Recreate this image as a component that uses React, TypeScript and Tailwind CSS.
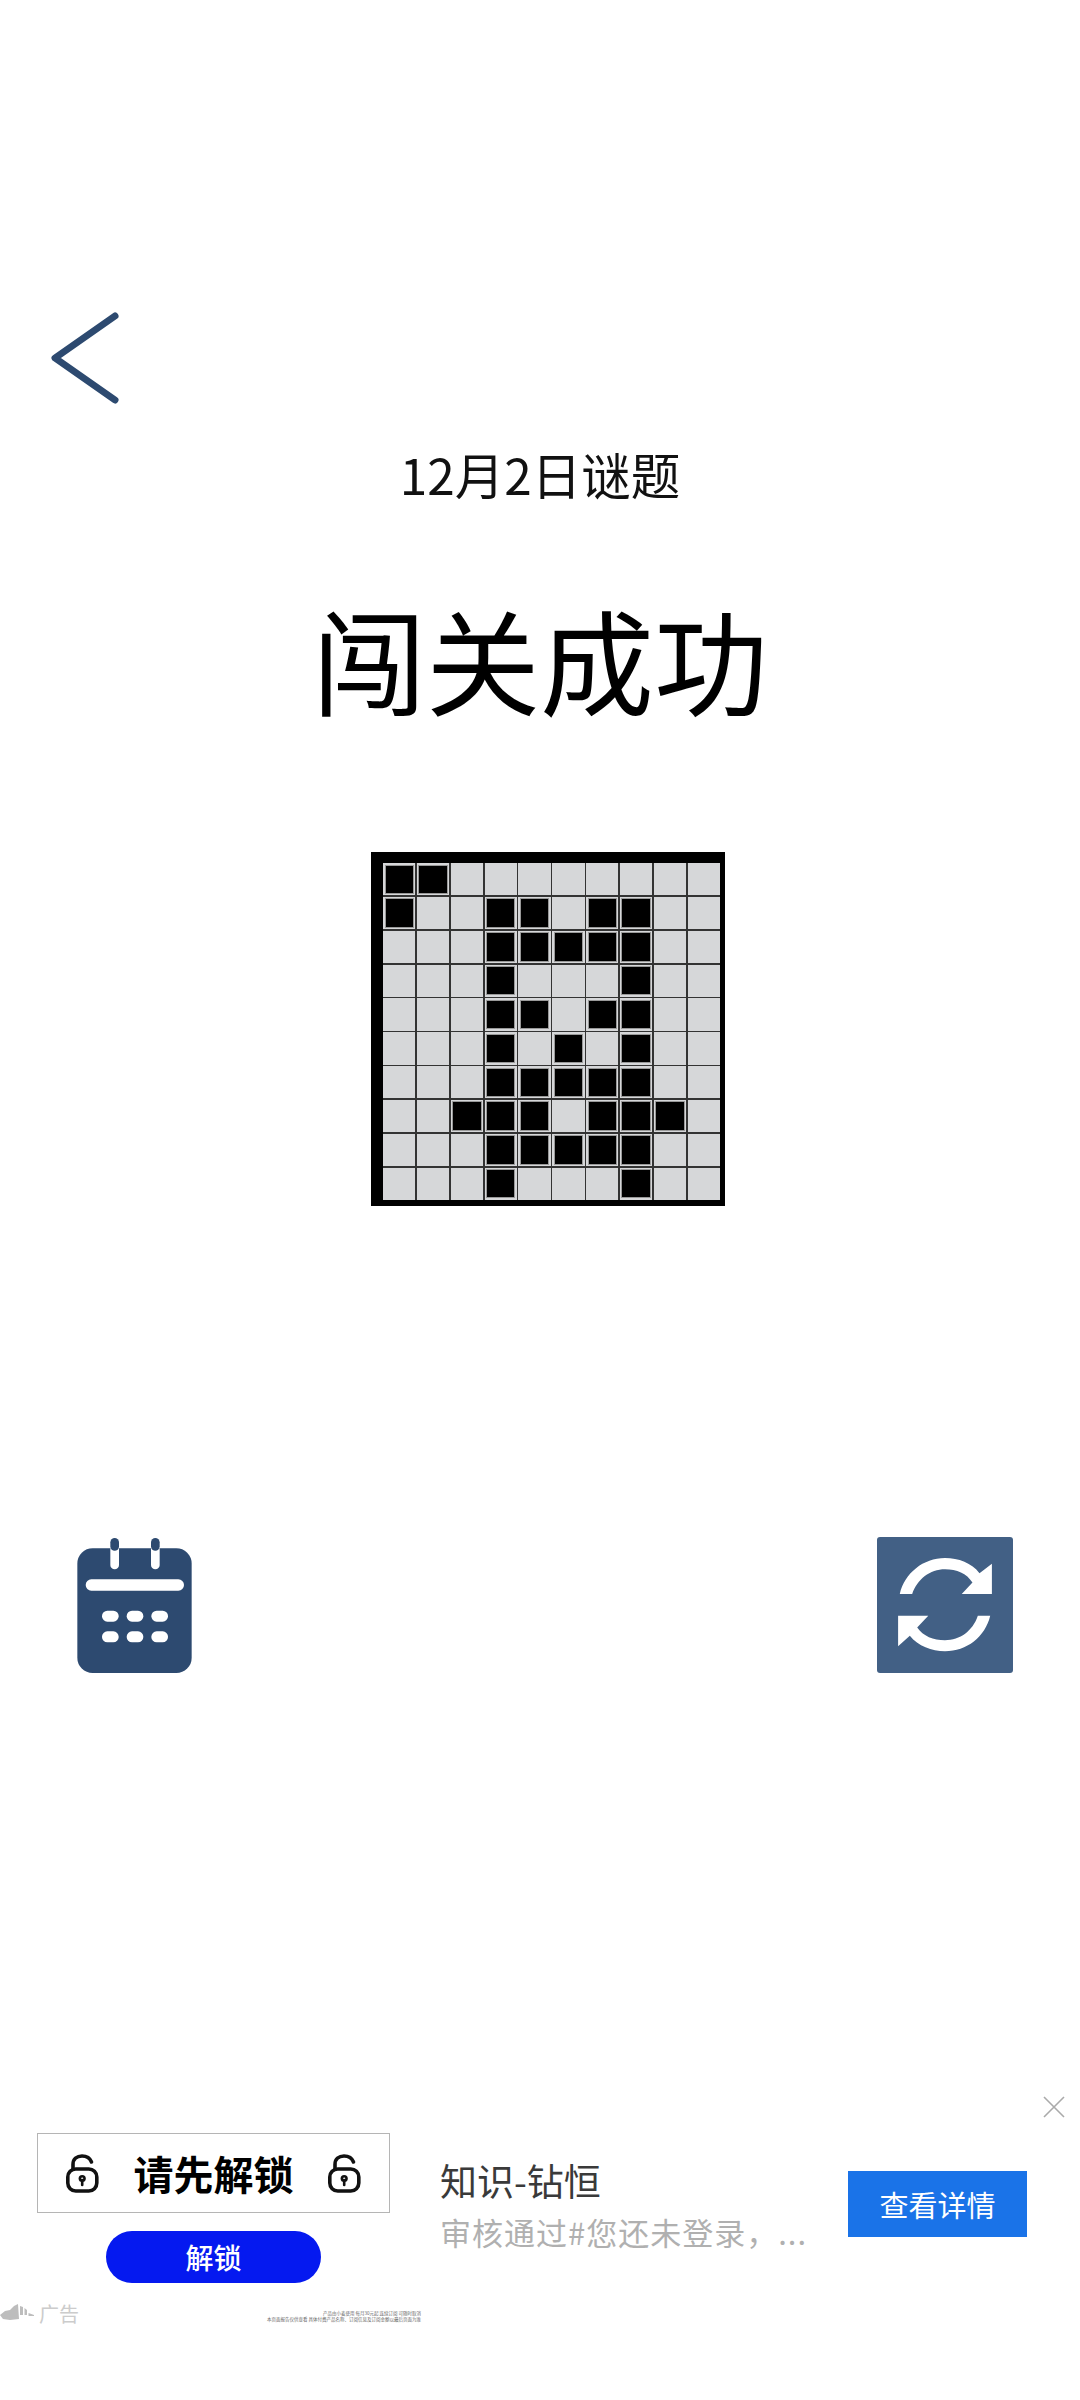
const rows = [
	'1100000000',
	'1001101100',
	'0001111100',
	'0001000100',
	'0001101100',
	'0001010100',
	'0001111100',
	'0011101110',
	'0001111100',
	'0001000100',
];

const cjk = "font-['Noto_Sans_CJK_SC','Noto_Sans',sans-serif]";

function LockIcon() {
	return (
		<svg width="33" height="39" viewBox="0 0 33 39" fill="none" stroke="#111" strokeWidth="3.6" className="shrink-0">
			<rect x="1.8" y="15" width="29" height="22" rx="8" />
			<path d="M7 15V10.5C7 5 11 2 16 2C20.5 2 24 4 25.5 8" strokeLinecap="round" />
			<circle cx="16.2" cy="24.5" r="3.6" fill="#111" stroke="none" />
			<circle cx="16.2" cy="24.5" r="1" fill="#fff" stroke="none" />
			<path d="M16.2 26V31" strokeWidth="2.6" strokeLinecap="round" />
		</svg>
	);
}

function CalendarIcon() {
	return (
		<svg width="115" height="135" viewBox="82 82 343 405">
			<rect x="82" y="113" width="343" height="374" rx="46" fill="#2d4a70" />
			<path d="M181 113H207V163A13 13 0 0 1 181 163Z" fill="#fff" />
			<path d="M303 113H329V163A13 13 0 0 1 303 163Z" fill="#fff" />
			<rect x="181" y="82" width="26" height="38" rx="13" fill="#2d4a70" />
			<rect x="303" y="82" width="26" height="38" rx="13" fill="#2d4a70" />
			<rect x="107" y="206" width="295" height="34" rx="17" fill="#fff" />
			{[156, 230, 304].map((x) => (
				<g key={x} fill="#fff">
					<rect x={x} y="300" width="50" height="33" rx="16" />
					<rect x={x} y="362" width="50" height="33" rx="16" />
				</g>
			))}
		</svg>
	);
}

function RefreshIcon() {
	return (
		<div className="w-[136px] h-[136px] rounded-[3px] bg-[#426085]">
			<svg width="136" height="136" viewBox="52 52 406 406" fill="#fff">
				<path d="M120 222C135 160 190 115 255 115C295 115 335 130 358 160L395 132V222H305L337 188C320 160 290 148 255 148C210 148 172 178 157 222Z" />
				<path d="M390 287C375 350 320 393 255 393C215 393 175 378 150 347L115 378V287H205L172 322C190 348 220 360 255 360C300 360 338 332 353 287Z" />
			</svg>
		</div>
	);
}

export default function App() {
	return (
		<div className={`relative w-[1080px] h-[2400px] bg-white overflow-hidden flex flex-col ${cjk}`}>
			<div className="pt-[312px] pl-[51px]">
				<svg width="68" height="92" viewBox="0 0 68 92" fill="none" stroke="#2d4a70" strokeWidth="7" strokeLinecap="round" strokeLinejoin="round">
					<path d="M64 4L4 46L64 88" />
				</svg>
			</div>

			<h2 className="mt-[40px] text-center text-[49.5px] leading-[60px] text-[#111] font-normal">12月2日谜题</h2>
			<h1 className="mt-[86px] text-center text-[114px] leading-[136px] text-black font-normal">闯关成功</h1>

			<div className="mt-[126px] ml-[371px] w-[354px] h-[354px] bg-black pl-[12px] pt-[11px] pr-[5px] pb-[6px]">
				<div className="grid grid-cols-10 grid-rows-10 w-full h-full gap-[1.5px] bg-[#333]">
					{rows.join('').split('').map((cell, i) => (
						<div key={i} className="bg-[#d6d7d9] p-[1.5px]">
							{cell === '1' && <div className="w-full h-full bg-black border border-[#999]" />}
						</div>
					))}
				</div>
			</div>

			<div className="mt-[331px] pl-[77px] pr-[67px] flex justify-between items-end">
				<CalendarIcon />
				<RefreshIcon />
			</div>

			<div className="mt-[460px] pl-[37px] flex">
				<div className="w-[353px] flex flex-col items-center">
					<div className="w-full h-[80px] border border-[#b5b5b5] flex items-center justify-between px-[28px]">
						<LockIcon />
						<span className="text-[40px] leading-[48px] font-bold text-black">请先解锁</span>
						<LockIcon />
					</div>
					<button className="mt-[18px] w-[215px] h-[52px] rounded-full bg-[#0519f0] text-white text-[28px] leading-[52px] font-medium">解锁</button>
				</div>
				<div className="ml-[50px] mt-[25px] w-[371px]">
					<div className="text-[37px] leading-[44px] text-[#3a3a3a]">知识-钻恒</div>
					<div className="mt-[10px] text-[31px] leading-[40px] tracking-[1px] text-[#b0b0b0] whitespace-nowrap">审核通过#您还未登录，...</div>
				</div>
				<button className="ml-[37px] mt-[38px] w-[179px] h-[66px] bg-[#1a73e8] text-white text-[29px] leading-[66px]">查看详情</button>
			</div>

			<div className="mt-[18px] flex items-start">
				<svg width="34" height="16" viewBox="0 0 34 16" fill="#bdbdbd" className="mt-[3px]">
					<path d="M0 11L5 7L10 6L14 2L18 0L19 15L10 16L3 15Z" />
					<path d="M20 2L23 3V11L20 11Z" />
					<path d="M24.5 4L27 6V11L24.5 11Z" />
					<path d="M28.5 9L34 11V12H28.5Z" />
				</svg>
				<span className="ml-[5px] text-[20px] leading-[26px] text-[#cccccc]">广告</span>
				<div className="ml-[182px] mt-[9px] w-[160px] text-right text-[4.5px] leading-[6px] text-[#666] whitespace-nowrap">
					<div>产品由小麦使用 每月30元起 连续订阅 可随时取消</div>
					<div>本页面报告仅供查看 具体付费产品名称、订阅信息及订阅金额以最后页面为准</div>
				</div>
			</div>

			<svg width="22" height="22" viewBox="0 0 22 22" stroke="#aaa" strokeWidth="1.6" className="absolute left-[1043px] top-[2096px]">
				<path d="M1 1L21 21M21 1L1 21" />
			</svg>
		</div>
	);
}
